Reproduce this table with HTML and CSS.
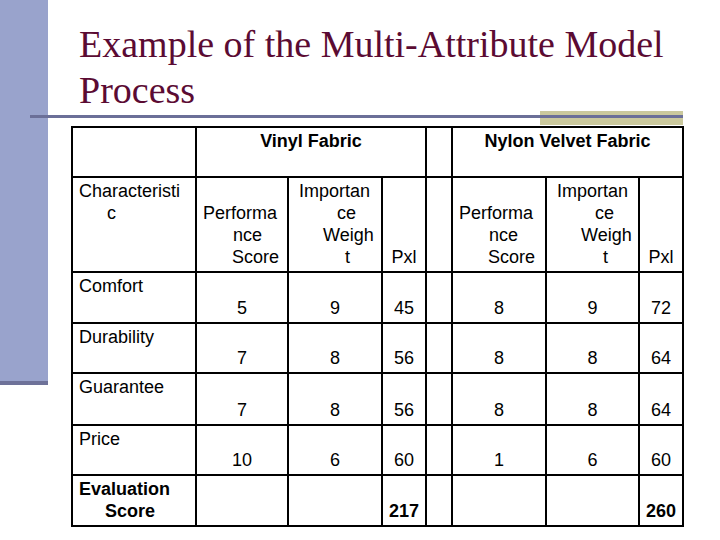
FILE: index.html
```html
<!DOCTYPE html>
<html>
<head>
<meta charset="utf-8">
<link rel="stylesheet" href="styles.css">
</head>
<body>
<div class="slide">
  <div class="sidebar"></div>
  <div class="main">
    <h1 class="title">Example of the Multi-Attribute Model Process</h1>
    <div class="rule"></div>
    <table class="grid">
      <colgroup>
        <col class="c1"><col class="c2"><col class="c3"><col class="c4">
        <col class="c5"><col class="c6"><col class="c7"><col class="c8">
      </colgroup>
      <tr class="h50">
        <td></td>
        <td class="group" colspan="3">Vinyl Fabric</td>
        <td></td>
        <td class="group" colspan="3">Nylon Velvet Fabric</td>
      </tr>
      <tr class="h95">
        <td class="chr"><span class="ln">Characteristi</span><span class="ln in-c">c</span></td>
        <td class="hd"><span class="ln in-p1">Performa</span><span class="ln in-p2">nce</span><span class="ln in-p3">Score</span></td>
        <td class="hd"><span class="ln in-i1">Importan</span><span class="ln in-i2">ce</span><span class="ln in-i3">Weigh</span><span class="ln in-i4">t</span></td>
        <td class="hd num">Pxl</td>
        <td></td>
        <td class="hd"><span class="ln in-p1">Performa</span><span class="ln in-p2">nce</span><span class="ln in-p3">Score</span></td>
        <td class="hd"><span class="ln in-i1">Importan</span><span class="ln in-i2">ce</span><span class="ln in-i3">Weigh</span><span class="ln in-i4">t</span></td>
        <td class="hd num">Pxl</td>
      </tr>
      <tr class="h51">
        <td class="lbl">Comfort</td>
        <td class="num">5</td><td class="num">9</td><td class="num">45</td><td></td>
        <td class="num">8</td><td class="num">9</td><td class="num">72</td>
      </tr>
      <tr class="h50">
        <td class="lbl">Durability</td>
        <td class="num">7</td><td class="num">8</td><td class="num">56</td><td></td>
        <td class="num">8</td><td class="num">8</td><td class="num">64</td>
      </tr>
      <tr class="h52">
        <td class="lbl">Guarantee</td>
        <td class="num">7</td><td class="num">8</td><td class="num">56</td><td></td>
        <td class="num">8</td><td class="num">8</td><td class="num">64</td>
      </tr>
      <tr class="h50">
        <td class="lbl">Price</td>
        <td class="num">10</td><td class="num">6</td><td class="num">60</td><td></td>
        <td class="num">1</td><td class="num">6</td><td class="num">60</td>
      </tr>
      <tr class="h51">
        <td class="lbl bold"><span class="ln">Evaluation</span><span class="ln in-s">Score</span></td>
        <td></td><td></td><td class="num bold">217</td><td></td>
        <td></td><td></td><td class="num bold">260</td>
      </tr>
    </table>
  </div>
</div>
</body>
</html>
```

FILE: styles.css
```css
* { box-sizing: border-box; }
body { margin: 0; background: #fff; font-family: "Liberation Sans", Arial, sans-serif; }
.slide { display: flex; width: 720px; height: 540px; overflow: hidden; background: #fff; }
.sidebar { flex: 0 0 48px; height: 385px; background: #99a3cc; border-bottom: 4px solid #6e7299; }
.main { flex: 1; min-width: 0; padding-top: 21px; }
.title {
  margin: 0 0 0 31px;
  width: 620px;
  font-family: "Liberation Serif", "Times New Roman", serif;
  font-weight: normal;
  font-size: 38px;
  line-height: 46px;
  color: #5b0b33;
}
.rule {
  margin: -2px 0 0 -18px;
  width: 653px;
  height: 14px;
  background:
    linear-gradient(#6b6f98, #6b6f98) 0 4px / 100% 3px no-repeat,
    linear-gradient(#cbc99d, #cbc99d) 100% 0 / 143px 100% no-repeat;
}
.grid {
  margin: 1px 0 0 23px;
  width: 613px;
  table-layout: fixed;
  border-collapse: separate;
  border-spacing: 0;
  border-top: 2px solid #000;
  border-left: 2px solid #000;
  font-size: 18px;
  line-height: 22px;
  color: #000;
}
.c1 { width: 124px; } .c2 { width: 92px; } .c3 { width: 94px; } .c4 { width: 44px; }
.c5 { width: 26px; } .c6 { width: 94px; } .c7 { width: 93px; } .c8 { width: 44px; }
.h50 { height: 50px; } .h51 { height: 51px; } .h52 { height: 52px; } .h95 { height: 95px; }
.grid td {
  border-right: 2px solid #000;
  border-bottom: 2px solid #000;
  padding: 0;
  vertical-align: top;
  white-space: nowrap;
}
.grid td.group { font-weight: bold; text-align: center; padding-top: 2px; }
.grid td.chr { padding: 2px 0 0 6px; }
.grid td.hd { vertical-align: bottom; padding-bottom: 3px; }
.grid td.num { vertical-align: bottom; text-align: center; padding-bottom: 3px; }
.grid td.lbl { padding: 2px 0 0 6px; }
.grid td.bold { font-weight: bold; }
.ln { display: block; }
.in-c { padding-left: 28px; }
.in-p1 { padding-left: 6px; }
.in-p2 { padding-left: 36px; }
.in-p3 { padding-left: 35px; }
.in-i1 { padding-left: 10px; }
.in-i2 { padding-left: 48px; }
.in-i3 { padding-left: 34px; }
.in-i4 { padding-left: 56px; }
.in-s { padding-left: 26px; }
```
